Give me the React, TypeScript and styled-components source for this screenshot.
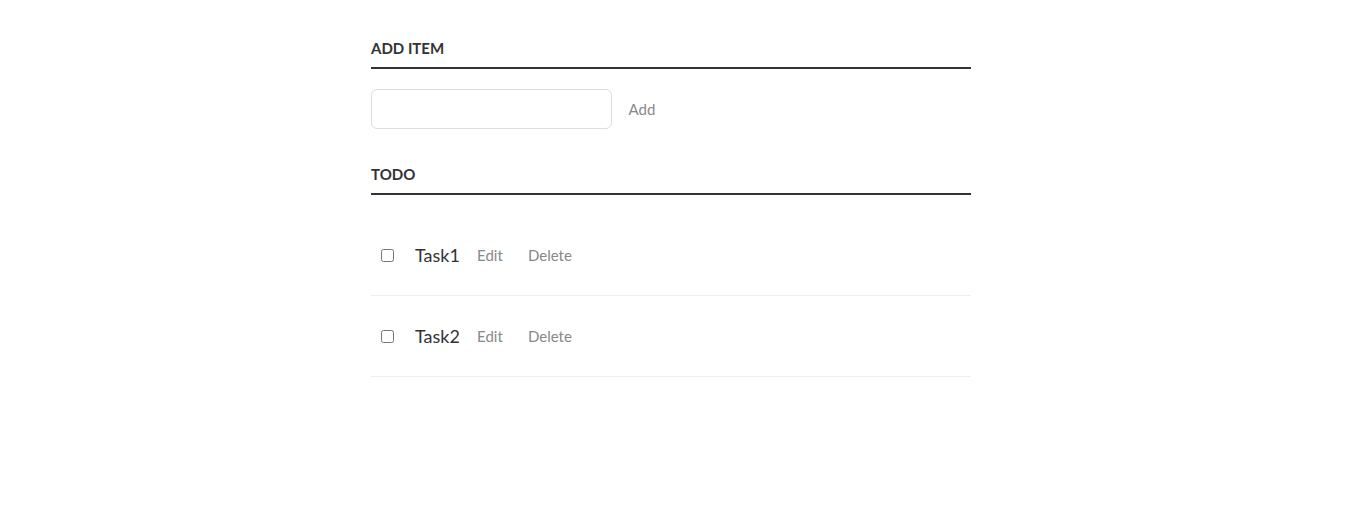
import React from 'react'
import styled, { createGlobalStyle } from 'styled-components'

const GlobalStyle = createGlobalStyle`
  body {
    margin: 8px;
    background: #fff;
    font-family: Lato, "Liberation Sans", sans-serif;
  }
`

const Page = styled.div`
  display: flex;
  justify-content: center;
  padding-right: 8px;
`

const Container = styled.div`
  width: 600px;
  padding-top: 1px;
`

const Heading = styled.h3`
  color: #333;
  font-weight: 700;
  font-size: 15px;
  line-height: 18px;
  border-bottom: 2px solid #333;
  padding: 30px 0 10px;
  margin: 0;
  text-transform: uppercase;
`

const AddRow = styled.p`
  display: flex;
  align-items: center;
  margin: 20px 0 6px;
`

const TextInput = styled.input`
  box-sizing: content-box;
  margin: 0;
  width: 219px;
  height: 18px;
  font-size: 18px;
  line-height: 18px;
  padding: 10px;
  border: 1px solid #ddd;
  border-radius: 6px;
  background: #fff;
  font-family: Lato, sans-serif;
  color: #888;
  outline: none;
`

const LinkButton = styled.button`
  background: none;
  border: 0;
  padding: 0;
  color: #888;
  font-size: 15px;
  width: 60px;
  font-family: Lato, sans-serif;
  cursor: pointer;
`

const List = styled.ul`
  list-style: none;
  margin: 20px 0 0;
  padding: 0;
`

const Item = styled.li`
  display: flex;
  align-items: center;
  padding: 20px 0;
  border-bottom: 1px solid #eee;
`

const Check = styled.input`
  width: 13px;
  height: 13px;
  margin: 1px 10px 0;
`

const TaskLabel = styled.label`
  font-size: 18px;
  line-height: 40px;
  padding: 0 0 0 11px;
  color: #333;
`

const tasks = ['Task1', 'Task2']

function App() {
  return (
    <Page>
      <GlobalStyle />
      <Container>
        <Heading>Add item</Heading>
        <AddRow>
          <TextInput type="text" />
          <LinkButton>Add</LinkButton>
        </AddRow>
        <Heading>Todo</Heading>
        <List>
          {tasks.map(t => (
            <Item key={t}>
              <Check type="checkbox" />
              <TaskLabel>{t}</TaskLabel>
              <LinkButton>Edit</LinkButton>
              <LinkButton>Delete</LinkButton>
            </Item>
          ))}
        </List>
      </Container>
    </Page>
  )
}

export default App
